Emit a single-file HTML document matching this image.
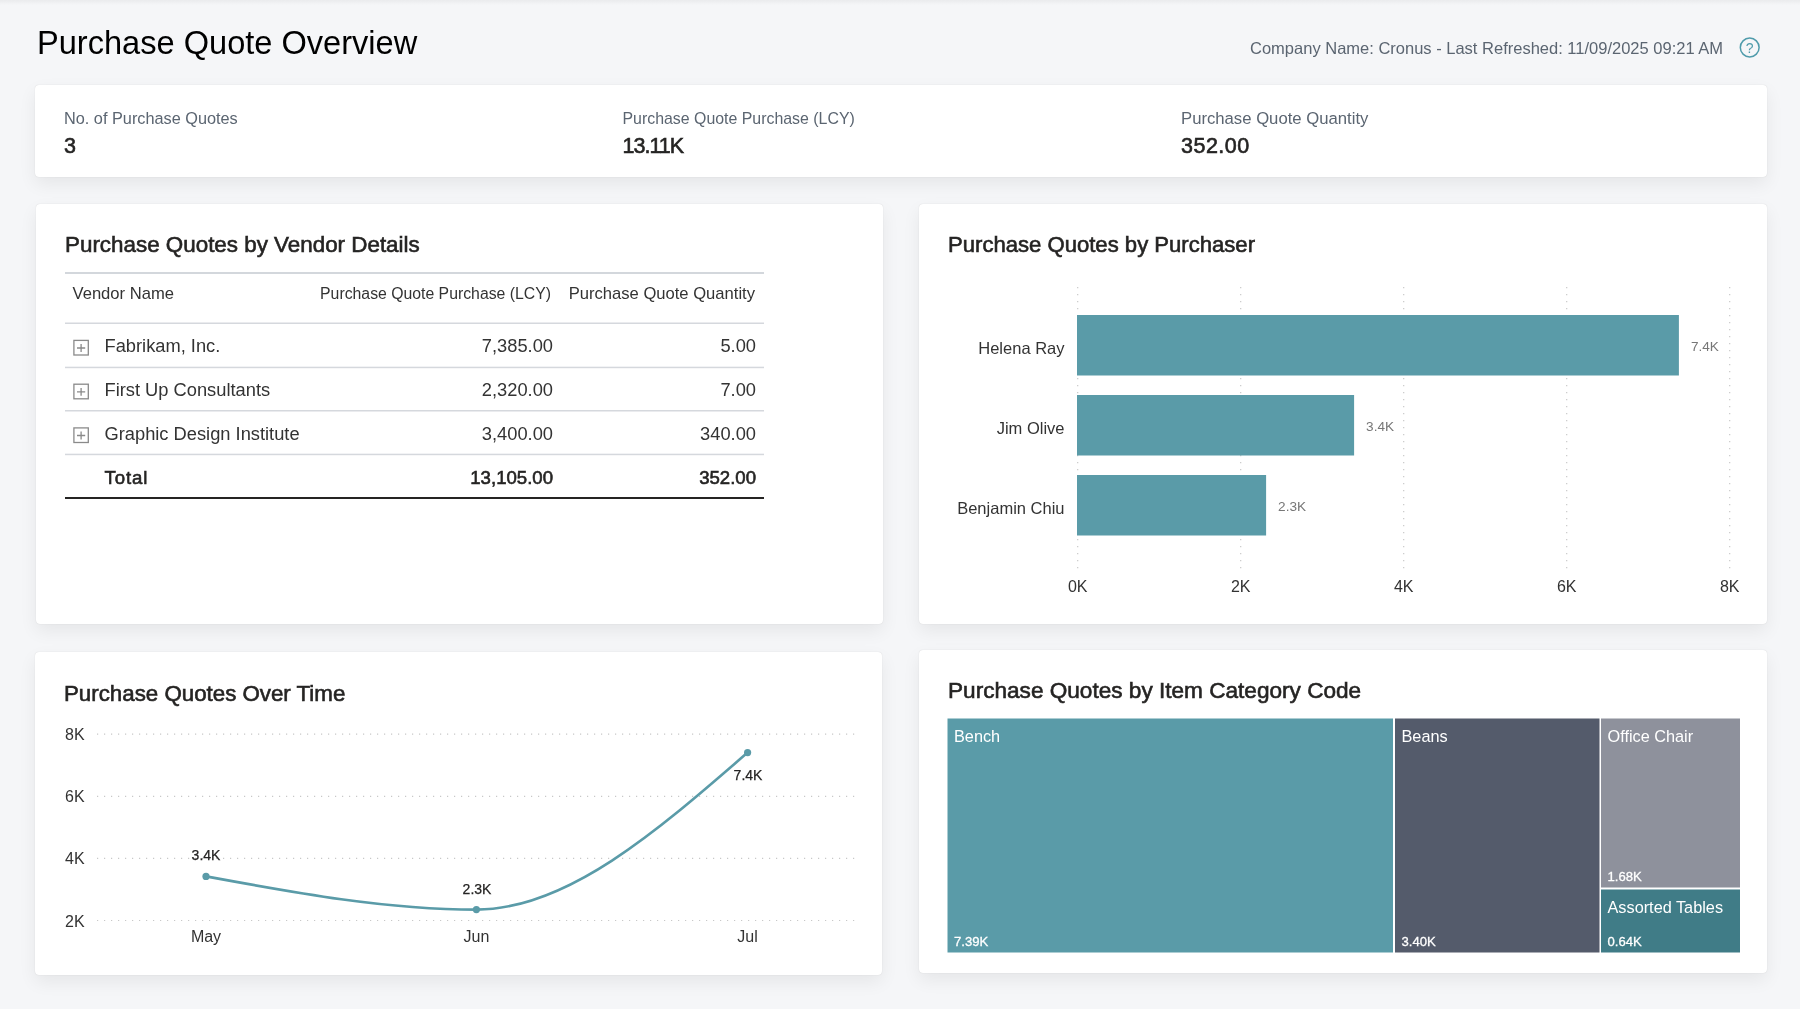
<!DOCTYPE html>
<html>
<head>
<meta charset="utf-8">
<title>Purchase Quote Overview</title>
<style>
html,body{margin:0;padding:0;}
body{width:1800px;height:1009px;overflow:hidden;background:#f5f6f8;position:relative;font-family:"Liberation Sans",sans-serif;}
.topshade{position:absolute;left:0;top:0;width:1800px;height:5px;background:linear-gradient(#eaebed,rgba(245,246,248,0));}
.card{position:absolute;background:#fff;border-radius:4px;box-shadow:0 0 1px rgba(0,0,0,0.16),0 7px 18px rgba(0,0,0,0.065);}
svg.ov{position:absolute;left:0;top:0;will-change:transform;}
text{font-family:"Liberation Sans",sans-serif;}
.sb{stroke:#252423;stroke-width:0.6px;}
.sbw{stroke:#fff;stroke-width:0.3px;}
</style>
</head>
<body>
<div class="topshade"></div>
<div class="card" id="c-kpi" style="left:35px;top:85px;width:1732px;height:92px;"></div>
<div class="card" id="c-vendor" style="left:36px;top:204px;width:847px;height:420px;"></div>
<div class="card" id="c-purch" style="left:919px;top:204px;width:848px;height:420px;"></div>
<div class="card" id="c-time" style="left:35px;top:652px;width:847px;height:323px;"></div>
<div class="card" id="c-tree" style="left:919px;top:650px;width:848px;height:323px;"></div>

<svg class="ov" width="1800" height="1009" viewBox="0 0 1800 1009">
  <!-- Header -->
  <text x="37" y="54" font-size="32.6" fill="#000">Purchase Quote Overview</text>
  <text x="1723" y="54" font-size="16.5" fill="#5b6571" text-anchor="end">Company Name: Cronus - Last Refreshed: 11/09/2025 09:21 AM</text>
  <circle cx="1749.7" cy="47.5" r="9.4" fill="none" stroke="#4f9bab" stroke-width="1.5"/>
  <text x="1749.7" y="53" font-size="14" fill="#4f9bab" text-anchor="middle">?</text>

  <!-- KPI -->
  <text x="64" y="124" font-size="16.3" fill="#5b6571">No. of Purchase Quotes</text>
  <text x="64" y="153" font-size="21.5" class="sb" fill="#252423">3</text>
  <text x="622.5" y="124" font-size="15.9" fill="#5b6571">Purchase Quote Purchase (LCY)</text>
  <text x="622.5" y="153" font-size="21.5" class="sb" fill="#252423" letter-spacing="-1.0">13.11K</text>
  <text x="1181" y="124" font-size="16.7" fill="#5b6571">Purchase Quote Quantity</text>
  <text x="1181" y="153" font-size="21.5" class="sb" fill="#252423" letter-spacing="0.5">352.00</text>

  <!-- Vendor table -->
  <text x="65" y="252" font-size="22.4" class="sb" fill="#252423">Purchase Quotes by Vendor Details</text>
  <rect x="65" y="272" width="699" height="2" fill="#d3d7dc"/>
  <text x="72.5" y="299" font-size="16.6" fill="#333">Vendor Name</text>
  <text x="551" y="299" font-size="15.8" fill="#333" text-anchor="end">Purchase Quote Purchase (LCY)</text>
  <text x="755" y="299" font-size="16.6" fill="#333" text-anchor="end">Purchase Quote Quantity</text>
  <rect x="65" y="322.5" width="699" height="1.5" fill="#d5d8dd"/>
  <rect x="73.9" y="340.4" width="14.4" height="14.6" fill="none" stroke="#8a8a8a" stroke-width="1.3"/>
  <path d="M77 348.0H85.2M81.1 344.1V351.9" stroke="#8a8a8a" stroke-width="1.3" fill="none"/>
  <text x="104.5" y="352.1" font-size="18.3" fill="#333">Fabrikam, Inc.</text>
  <text x="553" y="352.1" font-size="18.3" fill="#333" text-anchor="end">7,385.00</text>
  <text x="756" y="352.1" font-size="18.3" fill="#333" text-anchor="end">5.00</text>
  <rect x="65" y="366.7" width="699" height="1.5" fill="#d5d8dd"/>
  <rect x="73.9" y="384.2" width="14.4" height="14.6" fill="none" stroke="#8a8a8a" stroke-width="1.3"/>
  <path d="M77 391.8H85.2M81.1 387.9V395.7" stroke="#8a8a8a" stroke-width="1.3" fill="none"/>
  <text x="104.5" y="395.9" font-size="18.3" fill="#333">First Up Consultants</text>
  <text x="553" y="395.9" font-size="18.3" fill="#333" text-anchor="end">2,320.00</text>
  <text x="756" y="395.9" font-size="18.3" fill="#333" text-anchor="end">7.00</text>
  <rect x="65" y="410.0" width="699" height="1.5" fill="#d5d8dd"/>
  <rect x="73.9" y="427.9" width="14.4" height="14.6" fill="none" stroke="#8a8a8a" stroke-width="1.3"/>
  <path d="M77 435.5H85.2M81.1 431.6V439.4" stroke="#8a8a8a" stroke-width="1.3" fill="none"/>
  <text x="104.5" y="439.6" font-size="18.3" fill="#333">Graphic Design Institute</text>
  <text x="553" y="439.6" font-size="18.3" fill="#333" text-anchor="end">3,400.00</text>
  <text x="756" y="439.6" font-size="18.3" fill="#333" text-anchor="end">340.00</text>
  <rect x="65" y="453.7" width="699" height="1.5" fill="#d5d8dd"/>
  <text x="104.5" y="484" font-size="18.6" class="sb" fill="#252423" letter-spacing="0.9">Total</text>
  <text x="553" y="484" font-size="18.6" class="sb" fill="#252423" text-anchor="end">13,105.00</text>
  <text x="756" y="484" font-size="18.6" class="sb" fill="#252423" text-anchor="end">352.00</text>
  <rect x="65" y="497" width="699" height="2" fill="#252423"/>
  <text x="948" y="252" font-size="22.1" class="sb" fill="#252423">Purchase Quotes by Purchaser</text>
  <line x1="1077.7" y1="287" x2="1077.7" y2="572" stroke="#c8c8c8" stroke-width="1.2" stroke-dasharray="1.2 5.8"/>
  <line x1="1240.7" y1="287" x2="1240.7" y2="572" stroke="#c8c8c8" stroke-width="1.2" stroke-dasharray="1.2 5.8"/>
  <line x1="1403.7" y1="287" x2="1403.7" y2="572" stroke="#c8c8c8" stroke-width="1.2" stroke-dasharray="1.2 5.8"/>
  <line x1="1566.7" y1="287" x2="1566.7" y2="572" stroke="#c8c8c8" stroke-width="1.2" stroke-dasharray="1.2 5.8"/>
  <line x1="1729.7" y1="287" x2="1729.7" y2="572" stroke="#c8c8c8" stroke-width="1.2" stroke-dasharray="1.2 5.8"/>
  <rect x="1077" y="315" width="601.9" height="60.5" fill="#5a9ba8"/>
  <text x="1064.5" y="353.5" font-size="16.5" fill="#333" text-anchor="end">Helena Ray</text>
  <text x="1690.9" y="351.2" font-size="13.6" fill="#777">7.4K</text>
  <rect x="1077" y="395" width="277.1" height="60.5" fill="#5a9ba8"/>
  <text x="1064.5" y="433.5" font-size="16.5" fill="#333" text-anchor="end">Jim Olive</text>
  <text x="1366.1" y="431.2" font-size="13.6" fill="#777">3.4K</text>
  <rect x="1077" y="475" width="189.1" height="60.5" fill="#5a9ba8"/>
  <text x="1064.5" y="513.5" font-size="16.5" fill="#333" text-anchor="end">Benjamin Chiu</text>
  <text x="1278.1" y="511.2" font-size="13.6" fill="#777">2.3K</text>
  <text x="1077.7" y="592" font-size="16" fill="#333" text-anchor="middle">0K</text>
  <text x="1240.7" y="592" font-size="16" fill="#333" text-anchor="middle">2K</text>
  <text x="1403.7" y="592" font-size="16" fill="#333" text-anchor="middle">4K</text>
  <text x="1566.7" y="592" font-size="16" fill="#333" text-anchor="middle">6K</text>
  <text x="1729.7" y="592" font-size="16" fill="#333" text-anchor="middle">8K</text>
  <text x="64" y="701" font-size="22.3" class="sb" fill="#252423">Purchase Quotes Over Time</text>
  <line x1="97" y1="734.2" x2="858" y2="734.2" stroke="#c8c8c8" stroke-width="1.2" stroke-dasharray="1.2 5.8"/>
  <text x="65" y="740.2" font-size="16" fill="#333">8K</text>
  <line x1="97" y1="796.3" x2="858" y2="796.3" stroke="#c8c8c8" stroke-width="1.2" stroke-dasharray="1.2 5.8"/>
  <text x="65" y="802.3" font-size="16" fill="#333">6K</text>
  <line x1="97" y1="858.4" x2="858" y2="858.4" stroke="#c8c8c8" stroke-width="1.2" stroke-dasharray="1.2 5.8"/>
  <text x="65" y="864.4" font-size="16" fill="#333">4K</text>
  <line x1="97" y1="920.5" x2="858" y2="920.5" stroke="#c8c8c8" stroke-width="1.2" stroke-dasharray="1.2 5.8"/>
  <text x="65" y="926.5" font-size="16" fill="#333">2K</text>
  <path d="M206,876.4 C296.1,893.0 386.3,909.6 476.4,909.6 C566.8,909.6 657.2,831.1 747.6,752.6" fill="none" stroke="#5a9ba8" stroke-width="2.6" stroke-linecap="round"/>
  <circle cx="206" cy="876.4" r="3.6" fill="#5a9ba8"/>
  <circle cx="476.4" cy="909.6" r="3.6" fill="#5a9ba8"/>
  <circle cx="747.6" cy="752.6" r="3.6" fill="#5a9ba8"/>
  <text x="206" y="860" font-size="14" fill="#252423" stroke="#252423" stroke-width="0.25" text-anchor="middle">3.4K</text>
  <text x="477" y="894" font-size="14" fill="#252423" stroke="#252423" stroke-width="0.25" text-anchor="middle">2.3K</text>
  <text x="748" y="780" font-size="14" fill="#252423" stroke="#252423" stroke-width="0.25" text-anchor="middle">7.4K</text>
  <text x="206" y="942" font-size="16" fill="#333" text-anchor="middle">May</text>
  <text x="476.4" y="942" font-size="16" fill="#333" text-anchor="middle">Jun</text>
  <text x="747.6" y="942" font-size="16" fill="#333" text-anchor="middle">Jul</text>
  <text x="948" y="698" font-size="22.6" class="sb" fill="#252423">Purchase Quotes by Item Category Code</text>
  <rect x="947.5" y="718.5" width="445.5" height="234.0" fill="#5a9ba8"/>
  <text x="955.0" y="741.9" font-size="16.3" fill="#fff" dx="-1">Bench</text>
  <text x="955.0" y="946.0" font-size="13.1" class="sbw" fill="#fff" dx="-1">7.39K</text>
  <rect x="1395" y="718.5" width="204.5" height="234.0" fill="#545b6b"/>
  <text x="1402.5" y="741.9" font-size="16.3" fill="#fff" dx="-1">Beans</text>
  <text x="1402.5" y="946.0" font-size="13.1" class="sbw" fill="#fff" dx="-1">3.40K</text>
  <rect x="1601" y="718.5" width="139.0" height="169.0" fill="#8e919c"/>
  <text x="1608.5" y="741.9" font-size="16.3" fill="#fff" dx="-1">Office Chair</text>
  <text x="1608.5" y="881.0" font-size="13.1" class="sbw" fill="#fff" dx="-1">1.68K</text>
  <rect x="1601" y="889.5" width="139.0" height="63.0" fill="#407c87"/>
  <text x="1608.5" y="912.9" font-size="16.3" fill="#fff" dx="-1">Assorted Tables</text>
  <text x="1608.5" y="946.0" font-size="13.1" class="sbw" fill="#fff" dx="-1">0.64K</text>
</svg>
</body>
</html>
